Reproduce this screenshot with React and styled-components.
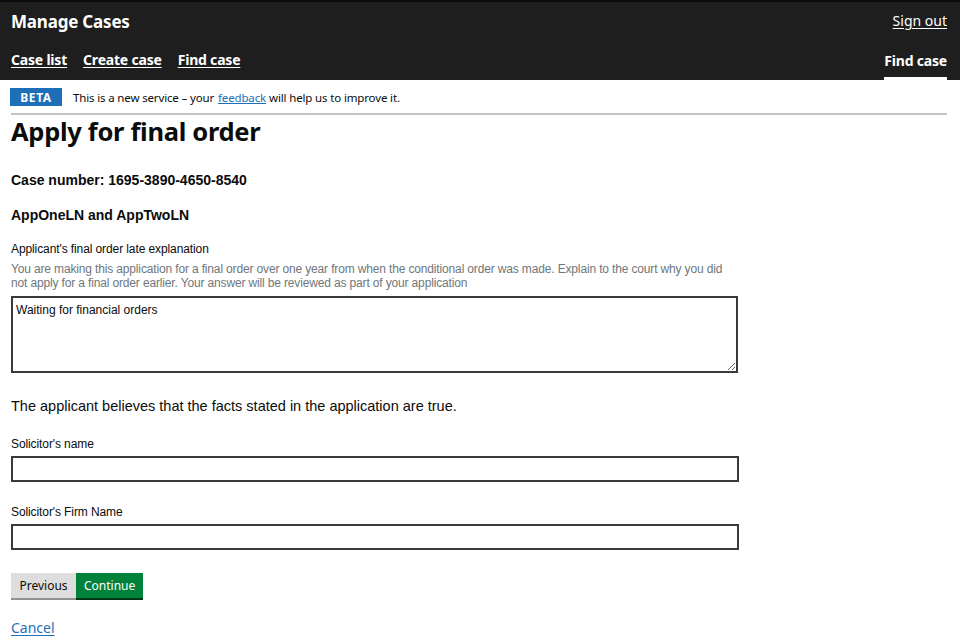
import React from "react";
import styled, { createGlobalStyle } from "styled-components";

const GlobalStyle = createGlobalStyle`
  body {
    margin: 0;
    background: #ffffff;
    font-family: "Liberation Sans", Arial, sans-serif;
    color: #0b0c0c;
  }
`;

const gds = `"Noto Sans", "Liberation Sans", Arial, sans-serif`;

const Header = styled.header`
  background-color: #1e1e1e;
  border-top: 2px solid #0b0c0c;
  height: 78px;
  display: flex;
  flex-direction: column;
  padding: 0 13px 0 11px;
  font-family: ${gds};
  color: #ffffff;
`;

const HeaderTop = styled.div`
  display: flex;
  justify-content: space-between;
  align-items: center;
  height: 38px;
`;

const AppName = styled.div`
  font-size: 17px;
  font-weight: 700;
  letter-spacing: -0.2px;
`;

const HeaderLink = styled.a`
  color: #ffffff;
  font-size: 14px;
  text-decoration: underline;
  text-underline-offset: 2px;
  margin-top: -2px;
`;

const NavRow = styled.nav`
  display: flex;
  justify-content: space-between;
  align-items: flex-end;
  flex: 1;
`;

const NavList = styled.div`
  display: flex;
  gap: 16px;
  align-self: center;
  margin-top: -1px;
`;

const NavLink = styled.a`
  color: #ffffff;
  font-size: 14px;
  font-weight: 700;
  text-decoration: underline;
  text-underline-offset: 2px;
  letter-spacing: -0.2px;
`;

const ActiveTab = styled.div`
  display: flex;
  flex-direction: column;
  align-items: stretch;
  font-size: 14px;
  font-weight: 700;
  letter-spacing: -0.2px;
  height: 100%;
  justify-content: flex-end;
  &::after {
    content: "";
    display: block;
    height: 3px;
    margin-top: 7px;
    background: #ffffff;
  }
`;

const Main = styled.main`
  padding: 0 13px 0 11px;
`;

const PhaseBanner = styled.div`
  display: flex;
  align-items: center;
  gap: 11px;
  padding: 8px 0 7px;
  border-bottom: 2px solid #c4c4c4;
  font-family: ${gds};
  font-size: 11.5px;
`;

const Tag = styled.span`
  background: #1d70b8;
  color: #ffffff;
  font-weight: 700;
  font-size: 12px;
  letter-spacing: 0.6px;
  width: 52px;
  height: 18px;
  display: flex;
  align-items: center;
  justify-content: center;
  margin-left: -1px;
`;

const BannerText = styled.span`
  letter-spacing: -0.15px;
`;

const FeedbackLink = styled.a`
  color: #1d70b8;
  text-decoration: underline;
  margin: 0 3px 0 4px;
`;

const Title = styled.h1`
  font-family: ${gds};
  font-size: 25.5px;
  font-weight: 700;
  letter-spacing: -0.3px;
  margin: 1px 0 0;
  line-height: 30px;
`;

const SubHeading = styled.h2`
  font-size: 14px;
  font-weight: 700;
  margin: ${(p) => p.$top}px 0 0;
  line-height: 18px;
`;

const Field = styled.div`
  margin-top: ${(p) => p.$top}px;
  width: 728px;
`;

const Label = styled.label`
  display: block;
  font-size: 12px;
  line-height: 16px;
  letter-spacing: -0.1px;
`;

const Hint = styled.div`
  font-size: 12px;
  color: #6f777b;
  line-height: 14px;
  margin-top: 5px;
  letter-spacing: -0.15px;
`;

const TextArea = styled.textarea`
  display: block;
  box-sizing: border-box;
  width: 727px;
  height: 77px;
  margin-top: 6px;
  border: 2px solid #3a3a3a;
  padding: 5px 3px;
  font-family: "Liberation Sans", Arial, sans-serif;
  font-size: 12px;
  color: #0b0c0c;
  resize: vertical;
  outline: none;
`;

const TextInput = styled.input`
  display: block;
  box-sizing: border-box;
  width: 728px;
  height: 26px;
  margin-top: 4px;
  border: 2px solid #3a3a3a;
  padding: 2px 4px;
  font-size: 13px;
  outline: none;
`;

const Statement = styled.p`
  font-size: 14.5px;
  margin: 24px 0 0;
  line-height: 18px;
`;

const ButtonRow = styled.div`
  display: flex;
  margin-top: 23px;
`;

const Button = styled.button`
  font-family: ${gds};
  font-size: 12px;
  height: 25px;
  padding: 0 8px;
  border: none;
  cursor: pointer;
  background: ${(p) => (p.$primary ? "#00823b" : "#dedede")};
  color: ${(p) => (p.$primary ? "#ffffff" : "#0b0c0c")};
  box-shadow: 0 2px 0 ${(p) => (p.$primary ? "#003618" : "#929191")};
  width: ${(p) => p.$w}px;
`;

const CancelLink = styled.a`
  display: inline-block;
  margin-top: 20px;
  font-family: ${gds};
  font-size: 14px;
  color: #1d70b8;
  text-decoration: underline;
  text-underline-offset: 2px;
`;

export default function App() {
  return (
    <>
      <GlobalStyle />
      <Header>
        <HeaderTop>
          <AppName>Manage Cases</AppName>
          <HeaderLink href="#">Sign out</HeaderLink>
        </HeaderTop>
        <NavRow>
          <NavList>
            <NavLink href="#">Case list</NavLink>
            <NavLink href="#">Create case</NavLink>
            <NavLink href="#">Find case</NavLink>
          </NavList>
          <ActiveTab>Find case</ActiveTab>
        </NavRow>
      </Header>
      <Main>
        <PhaseBanner>
          <Tag>BETA</Tag>
          <BannerText>
            This is a new service – your
            <FeedbackLink href="#">feedback</FeedbackLink>
            will help us to improve it.
          </BannerText>
        </PhaseBanner>
        <Title>Apply for final order</Title>
        <SubHeading $top={25}>Case number: 1695-3890-4650-8540</SubHeading>
        <SubHeading $top={17}>AppOneLN and AppTwoLN</SubHeading>
        <Field $top={17}>
          <Label>Applicant's final order late explanation</Label>
          <Hint>
            You are making this application for a final order over one year from when the
            conditional order was made. Explain to the court why you did not apply for a final
            order earlier. Your answer will be reviewed as part of your application
          </Hint>
          <TextArea defaultValue="Waiting for financial orders" />
        </Field>
        <Statement>The applicant believes that the facts stated in the application are true.</Statement>
        <Field $top={21}>
          <Label>Solicitor's name</Label>
          <TextInput />
        </Field>
        <Field $top={22}>
          <Label>Solicitor's Firm Name</Label>
          <TextInput />
        </Field>
        <ButtonRow>
          <Button $w={65}>Previous</Button>
          <Button $primary $w={67}>Continue</Button>
        </ButtonRow>
        <CancelLink href="#">Cancel</CancelLink>
      </Main>
    </>
  );
}
